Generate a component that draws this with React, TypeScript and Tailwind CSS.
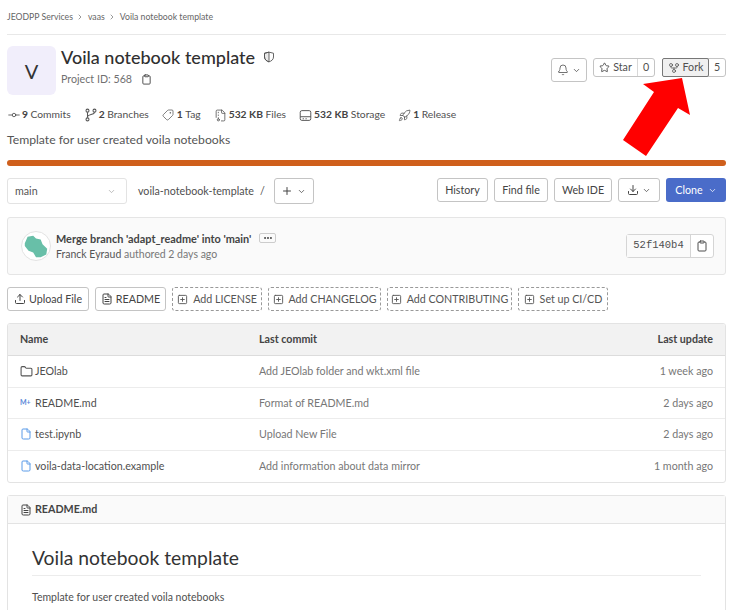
import { ChevronDown, Bell, Star, GitFork, Clipboard, GitCommitHorizontal, Tag, FileArchive, Rocket, Plus, Download, Upload, FileText, SquarePlus, Folder, File, ChevronRight, Ellipsis } from "lucide-react";

function BranchIcon({ className = "" }: { className?: string }) {
  return (
    <svg viewBox="0 0 16 16" width="14" height="14" fill="none" stroke="currentColor" strokeWidth="1.2" className={className}>
      <circle cx="4" cy="3" r="1.7" />
      <circle cx="12" cy="3" r="1.7" />
      <circle cx="4" cy="13" r="1.7" />
      <path d="M4 4.8V11.2M12 4.8C12 8 4.5 7 4 10" />
    </svg>
  );
}

function DriveIcon({ className = "" }: { className?: string }) {
  return (
    <svg viewBox="0 0 16 16" width="13" height="13" fill="none" stroke="currentColor" strokeWidth="1.2" className={className}>
      <rect x="1.5" y="2" width="13" height="12" rx="2" />
      <path d="M1.5 9.5H14.5M4.5 12H6M8 12H9.5" />
    </svg>
  );
}

function ShieldIcon() {
  return (
    <svg viewBox="0 0 16 16" width="12" height="12" className="ml-[8px] text-[#555]" fill="none" stroke="currentColor" strokeWidth="1.2">
      <path d="M8 1.5L14 3V8C14 11.5 11 13.5 8 14.5C5 13.5 2 11.5 2 8V3Z" />
      <path d="M8 1.5V14.5C5 13.5 2 11.5 2 8V3Z" fill="currentColor" fillOpacity="0.12" />
    </svg>
  );
}

const stats = [
  { icon: <GitCommitHorizontal size={14} strokeWidth={1.5} />, num: "9", label: "Commits" },
  { icon: <BranchIcon />, num: "2", label: "Branches" },
  { icon: <Tag size={12} strokeWidth={1.5} className="rotate-90" />, num: "1", label: "Tag" },
  { icon: <FileArchive size={13} strokeWidth={1.5} />, num: "532 KB", label: "Files" },
  { icon: <DriveIcon />, num: "532 KB", label: "Storage" },
  { icon: <Rocket size={13} strokeWidth={1.5} />, num: "1", label: "Release" },
];

const files = [
  { name: "JEOlab", kind: "folder", commit: "Add JEOlab folder and wkt.xml file", date: "1 week ago" },
  { name: "README.md", kind: "md", commit: "Format of README.md", date: "2 days ago" },
  { name: "test.ipynb", kind: "file", commit: "Upload New File", date: "2 days ago" },
  { name: "voila-data-location.example", kind: "file", commit: "Add information about data mirror", date: "1 month ago" },
];

const dashed = [
  { label: "Add LICENSE", w: "w-[90px]" },
  { label: "Add CHANGELOG", w: "w-[113px]" },
  { label: "Add CONTRIBUTING", w: "w-[125px]" },
  { label: "Set up CI/CD", w: "w-[90px]" },
];

function Btn({ children, className = "" }: { children: React.ReactNode; className?: string }) {
  return (
    <div className={`h-[24px] flex items-center justify-center border border-[#c4c4c4] rounded-[3px] bg-white text-[#444] ${className}`}>
      {children}
    </div>
  );
}

export default function App() {
  return (
    <div className="relative w-[733px] h-[610px] overflow-hidden bg-white px-[7px] text-[10.7px] text-[#4f4f4f] font-['Lato',sans-serif]">
      {/* Breadcrumb */}
      <div className="h-[35px] border-b border-[#e8e8e8] flex items-center gap-[3.5px] text-[8.7px] text-[#666]">
        <span>JEODPP Services</span>
        <ChevronRight size={8} />
        <span>vaas</span>
        <ChevronRight size={8} />
        <span>Voila notebook template</span>
      </div>

      {/* Project header */}
      <div className="mt-[11px] flex justify-between">
        <div className="flex">
          <div className="w-[49px] h-[49px] rounded-[6px] bg-[#f1eefb] flex items-center justify-center text-[20px] text-[#333]">V</div>
          <div className="ml-[5px]">
            <div className="flex items-center h-[28px] -mt-[3px]">
              <span className="text-[18px] font-medium text-[#303030]">Voila notebook template</span>
              <ShieldIcon />
            </div>
            <div className="flex items-center text-[10.7px] text-[#707070]">
              Project ID: 568
              <Clipboard size={11} className="ml-[9px] text-[#444]" />
            </div>
          </div>
        </div>
        <div className="flex mt-[12px] text-[10.7px]">
          <Btn className="w-[36px] h-[19px] gap-[3px]">
            <Bell size={12} strokeWidth={1.5} />
            <ChevronDown size={9} />
          </Btn>
          <div className="ml-[6px] flex h-[19px] border border-[#c4c4c4] rounded-[3px]">
            <div className="w-[44px] flex items-center justify-center gap-[3px] border-r border-[#d8d8d8]">
              <Star size={11} />
              Star
            </div>
            <div className="w-[16px] flex items-center justify-center">0</div>
          </div>
          <div className="ml-[7px] flex h-[19px] border border-[#c4c4c4] rounded-[3px]">
            <div className="w-[47px] flex items-center justify-center gap-[3px] border border-[#777] bg-[#f0f0f0] rounded-[2px] -m-px">
              <GitFork size={12} strokeWidth={1.5} />
              Fork
            </div>
            <div className="w-[16px] flex items-center justify-center ml-px">5</div>
          </div>
        </div>
      </div>

      {/* Stats */}
      <div className="mt-[11px] h-[18px] flex items-center gap-[13px] text-[10.3px]">
        {stats.map((s) => (
          <div key={s.label} className="flex items-center">
            <span className="w-[14px] mr-[1px] text-[#555] flex">{s.icon}</span>
            <b className="font-bold mr-[2.5px] text-[#444]">{s.num}</b>
            {s.label}
          </div>
        ))}
      </div>

      <div className="mt-[7px] text-[12.2px] leading-[18px] text-[#555]">Template for user created voila notebooks</div>

      <div className="mt-[11px] h-[6px] rounded-full bg-[#cf5f1c]" />

      {/* Branch row */}
      <div className="mt-[12px] flex items-start">
        <div className="w-[120px] h-[26px] border border-[#e3e3e3] rounded-[3px] flex items-center justify-between px-[7px] text-[#555]">
          main
          <ChevronDown size={9} className="text-[#aaa] mr-[3px]" />
        </div>
        <span className="ml-[11px] mt-[5px]">voila-notebook-template</span>
        <span className="ml-[6px] mt-[5px]">/</span>
        <Btn className="ml-[9px] w-[40px] h-[26px] gap-[4px]">
          <Plus size={12} />
          <ChevronDown size={9} />
        </Btn>
        <div className="ml-auto flex gap-[6px]">
          <Btn className="w-[51px]">History</Btn>
          <Btn className="w-[54px]">Find file</Btn>
          <Btn className="w-[58px]">Web IDE</Btn>
          <Btn className="w-[42px] gap-[3px]">
            <Download size={12} />
            <ChevronDown size={9} />
          </Btn>
          <div className="w-[60px] h-[24px] flex items-center justify-center gap-[5px] rounded-[3px] bg-[#4a6cc9] text-white">
            Clone
            <ChevronDown size={9} />
          </div>
        </div>
      </div>

      {/* Last commit */}
      <div className="mt-[13px] h-[58px] border border-[#e5e5e5] rounded-[3px] bg-[#fafafa] flex items-center pl-[13px] pr-[11px]">
        <div className="w-[30px] h-[30px] rounded-full border border-[#e3e3e3] bg-white overflow-hidden">
          <svg viewBox="0 0 30 30" className="w-full h-full">
            <path d="M3 12 L6 5 L12 4 L15 7 L20 8 L22 13 L27 18 L26 24 L20 27 L15 27 L12 22 L7 20 L3 15 Z" fill="#68bfa8" />
          </svg>
        </div>
        <div className="ml-[5px]">
          <div className="flex items-center font-bold text-[10.9px] leading-[15px] text-[#444]">
            Merge branch 'adapt_readme' into 'main'
            <span className="ml-[8px] w-[17px] h-[10px] border border-[#ccc] rounded-[2px] flex items-center justify-center">
              <Ellipsis size={10} strokeWidth={3} />
            </span>
          </div>
          <div className="text-[10.5px] leading-[16px] text-[#777]">
            <span className="text-[#555]">Franck Eyraud</span> authored 2 days ago
          </div>
        </div>
        <div className="ml-auto flex h-[24px] border border-[#d5d5d5] rounded-[3px] bg-white">
          <div className="w-[64px] flex items-center justify-center bg-[#fafafa] border-r border-[#d5d5d5] font-['Liberation_Mono',monospace] text-[10.5px]">52f140b4</div>
          <div className="w-[22px] flex items-center justify-center">
            <Clipboard size={12} />
          </div>
        </div>
      </div>

      {/* Quick actions */}
      <div className="mt-[12px] flex gap-[6px]">
        <Btn className="w-[82px] gap-[3px]">
          <Upload size={12} />
          Upload File
        </Btn>
        <Btn className="w-[71px] gap-[3px]">
          <FileText size={12} />
          README
        </Btn>
        {dashed.map((d) => (
          <div key={d.label} className={`h-[24px] flex items-center justify-center gap-[5px] border border-dashed border-[#999] rounded-[3px] text-[#555] ${d.w}`}>
            <SquarePlus size={11} />
            {d.label}
          </div>
        ))}
      </div>

      {/* File table */}
      <div className="mt-[12px] border border-[#e3e3e3] rounded-[3px] overflow-hidden">
        <div className="h-[32px] flex items-center px-[12px] bg-[#f2f2f2] border-b border-[#dcdcdc] font-bold text-[#444]">
          <div className="w-[239px]">Name</div>
          <div className="flex-1">Last commit</div>
          <div>Last update</div>
        </div>
        {files.map((f, i) => (
          <div key={f.name} className={`h-[31.5px] flex items-center px-[12px] ${i < 3 ? "border-b border-[#ececec]" : ""}`}>
            <div className="w-[239px] flex items-center">
              <span className="w-[15px] flex items-center text-[#5b9be8]">
                {f.kind === "folder" && <Folder size={13} className="text-[#555]" />}
                {f.kind === "md" && <span className="text-[7px] font-bold text-[#5b88d8]">M+</span>}
                {f.kind === "file" && <File size={12} />}
              </span>
              {f.name}
            </div>
            <div className="flex-1 text-[#777]">{f.commit}</div>
            <div className="text-[#777]">{f.date}</div>
          </div>
        ))}
      </div>

      {/* README */}
      <div className="mt-[12px] border border-[#e3e3e3] rounded-[3px]">
        <div className="h-[28px] flex items-center px-[12px] bg-[#fafafa] border-b border-[#e3e3e3] font-bold text-[#444]">
          <FileText size={12} className="mr-[3px]" />
          README.md
        </div>
        <div className="px-[24px] pt-[20px] pb-[20px]">
          <h1 className="text-[19.3px] leading-[28px] pb-[3px] border-b border-[#ececec] text-[#333]">Voila notebook template</h1>
          <p className="mt-[14px] text-[10.5px]">Template for user created voila notebooks</p>
        </div>
      </div>

      {/* Red annotation arrow */}
      <svg className="absolute left-0 top-0 pointer-events-none" width="733" height="610">
        <polygon points="682,78 643,84 654,92 623,140 646,156 678,108 690,115" fill="#ff0000" />
      </svg>
    </div>
  );
}
